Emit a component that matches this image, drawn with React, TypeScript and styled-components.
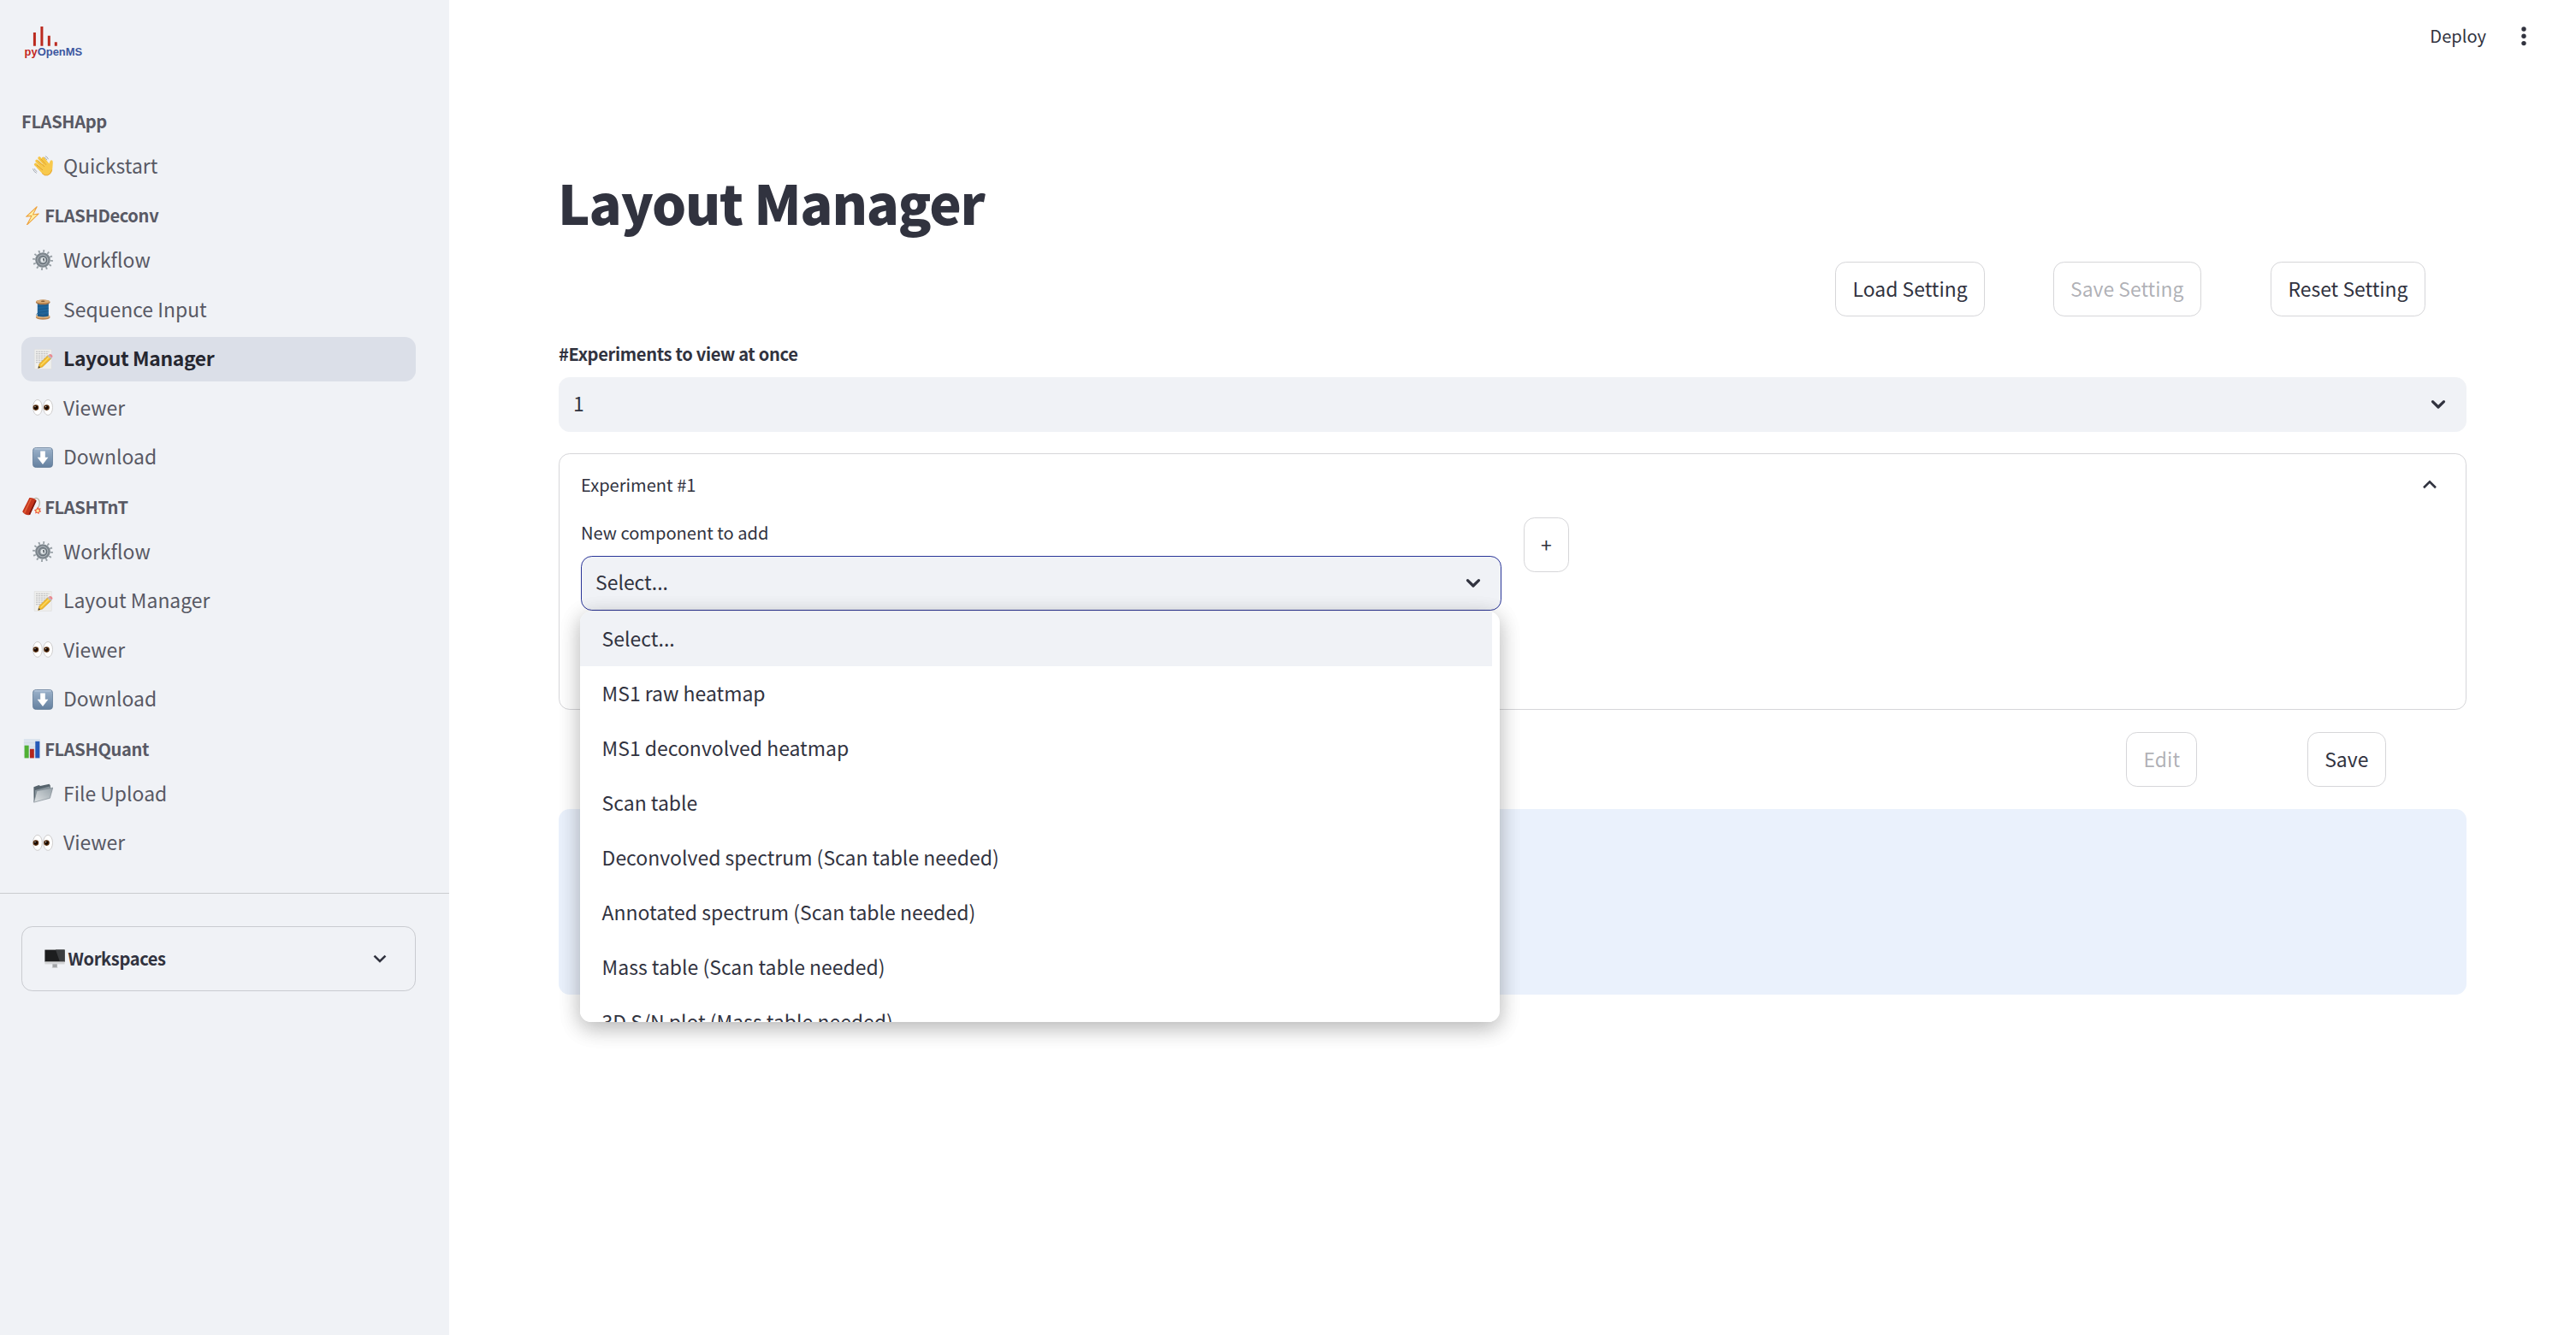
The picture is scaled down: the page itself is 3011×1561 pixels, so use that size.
import React from "react";
import styled, { createGlobalStyle } from "styled-components";

const FONT = '"Noto Sans CJK SC", "Noto Sans", sans-serif';
const INK = "#31333f";
const SIDE = "#f0f2f6";

const Global = createGlobalStyle`
  * { box-sizing: border-box; }
  body { margin: 0; background: #fff; color: ${INK}; font-family: ${FONT}; }
  button { font-family: inherit; }
`;

const Page = styled.div`display: flex; width: 3011px; height: 1561px; overflow: hidden;`;

const Sidebar = styled.aside`
  width: 525px; flex: none; background: ${SIDE}; display: flex; flex-direction: column;
`;
const LogoRow = styled.div`height: 113px; padding: 29px 0 0 28px;`;
const Nav = styled.nav`padding: 0 39px 0 25px;`;
const Section = styled.div`display: flex; flex-direction: column;`;
const SectionHead = styled.div`
  height: 52.8px; display: flex; align-items: center; padding-top: 5px;
  font-size: 20.1px; font-weight: 700; color: #585964; line-height: 1; letter-spacing: -0.34px;
`;
const HeadIcon = styled.span`display: flex; width: 27.2px; flex: none; padding: 0 0 1px 0.6px;`;
const NavItem = styled.a<{ $active?: boolean }>`
  display: flex; align-items: center; height: 51.2px; margin: 3.2px 0; padding: 0 0 3px 13px; gap: 12px;
  border-radius: 12.8px; font-size: 22.95px; line-height: 1;
  font-weight: ${(p) => (p.$active ? 700 : 400)};
  letter-spacing: ${(p) => (p.$active ? "-0.37px" : "normal")};
  color: ${(p) => (p.$active ? "#262730" : "#585964")};
  background: ${(p) => (p.$active ? "#dbdfe8" : "transparent")};
`;
const NavIcon = styled.span`display: flex; flex: none; margin-top: 2px;`;
const Divider = styled.div`height: 1px; margin-top: 29px; background: #cacccf;`;
const WorkspaceBox = styled.div`
  margin: 38px 39px 0 25px; height: 76px; border: 1px solid #c9cbd0; border-radius: 12.8px;
  display: flex; align-items: center; padding: 0 32px 0 26px; font-size: 20.1px; font-weight: 700;
  line-height: 1; letter-spacing: -0.38px;
`;
const Grow = styled.span`flex: 1; padding-left: 3.5px;`;

const Main = styled.main`flex: 1; padding: 0 128px; display: flex; flex-direction: column; min-width: 0;`;
const TopBar = styled.header`
  height: 84px; margin-right: -78px; display: flex; align-items: center; justify-content: flex-end; gap: 33px;
  font-size: 20.1px; line-height: 1;
`;
const Title = styled.h1`
  margin: 110px 0 28px -1px; height: 84px; line-height: 84px; font-size: 63.2px; font-weight: 900; letter-spacing: -1.22px;
`;
const ButtonRow = styled.div<{ $col: number; $top?: number }>`
  display: grid; grid-auto-flow: column; grid-auto-columns: ${(p) => p.$col}px; gap: 25.6px;
  justify-content: end; justify-items: start; margin-top: ${(p) => p.$top ?? 0}px;
`;
const Button = styled.button<{ $width?: number }>`
  height: 64px; padding: 0 19.2px 2px; border: 1px solid #d6d6d9; border-radius: 12.8px; background: #fff;
  color: ${INK}; font-size: 22.95px; line-height: 1; white-space: nowrap;
  width: ${(p) => (p.$width ? `${p.$width}px` : "auto")};
  &:disabled { color: rgba(49, 51, 63, 0.4); }
`;
const Label = styled.div<{ $bold?: boolean }>`
  height: 32px; line-height: 32px; margin: ${(p) => (p.$bold ? "28px 0 11px" : "1px 0 11px")}; font-size: 20.1px;
  font-weight: ${(p) => (p.$bold ? 700 : 400)}; letter-spacing: ${(p) => (p.$bold ? "-0.33px" : "normal")};
`;
const Select = styled.div<{ $focus?: boolean }>`
  height: 64px; border-radius: 12.8px; background: ${SIDE}; display: flex; align-items: center;
  justify-content: space-between; padding: 0 23px 0 16px; font-size: 22.95px; line-height: 1;
  border: 1px solid ${(p) => (p.$focus ? "#2a3598" : SIDE)};
`;
const SelectText = styled.span`padding-bottom: 3.5px;`;
const Expander = styled.section`
  margin-top: 25px; height: 300px; border: 1px solid #d6d6d9; border-radius: 12.8px; padding: 0 25px;
`;
const ExpanderHead = styled.div`
  height: 72px; display: flex; align-items: center; justify-content: space-between; padding-right: 8px;
  font-size: 20.1px; line-height: 1;
`;
const Columns = styled.div`display: grid; grid-template-columns: 1fr 1fr; gap: 25.6px; padding-top: 2px; align-items: start;`;
const Field = styled.div`position: relative; padding-top: 1px;`;
const Menu = styled.ul`
  position: absolute; z-index: 5; left: -1px; right: 2.6px; top: calc(100% + 1px); height: 480px; margin: 0;
  padding: 0 9px 0 0; list-style: none; overflow: hidden; background: #fff; border-radius: 12.8px;
  box-shadow: 0 6.4px 25.6px rgba(0, 0, 0, 0.16), 0 6.4px 25.6px rgba(0, 0, 0, 0.16);
`;
const Option = styled.li<{ $on?: boolean }>`
  height: 64px; display: flex; align-items: center; padding: 0 25.6px 2px; font-size: 22.98px; line-height: 1;
  background: ${(p) => (p.$on ? SIDE : "#fff")};
`;
const Info = styled.div`margin-top: 26px; height: 217px; border-radius: 12.8px; background: #eaf1fc;`;

const Emoji = ({ size = 24, children }: { size?: number; children: React.ReactNode }) => (
  <svg width={size} height={size} viewBox="0 0 24 24" fill="none">{children}</svg>
);
const Wave = () => (
  <Emoji>
    <g stroke="#f6c544" strokeLinecap="round" strokeWidth="3.4">
      <path d="M5 6.2L13 14M8 2.8L16 12M12.6 3.2L18 10.5M3.6 10.3L11 17" />
    </g>
    <path d="M7 13L16.5 6.8L19.5 9.5C20 8 20.4 5.4 22 5.2C24 5 24 8 23.6 11C23.3 15 23.4 19 20.5 21.6C17.5 24 13.6 23.4 11 20.5L5 14Z" fill="#f8c94c" />
    <path d="M6.5 6L14 13M9.8 4L16 10.8M5 11L12 17" stroke="#d99a2b" strokeWidth=".8" />
    <path d="M11 20.5Q14 24 17.8 22.9Q21.6 21.4 22.8 16.5" stroke="#e3a22f" strokeWidth=".9" />
    <path d="M14 2.2Q16 3 16.8 4.8M15.2.6Q17.6 1.5 18.4 3.8M2.3 15.5Q3 17.5 5 18.6M.5 15.6Q1.3 18.8 4.4 20.3" stroke="#a9adb5" strokeWidth="1" strokeLinecap="round" />
  </Emoji>
);
const Gear = () => (
  <Emoji>
    <circle cx="12" cy="12" r="10.4" stroke="#98a0a6" strokeWidth="3" strokeDasharray="1.8 3.645" />
    <circle cx="12" cy="12" r="7.6" fill="#aab1b7" stroke="#7c858c" strokeWidth="2.4" />
    <circle cx="12" cy="12" r="4.7" fill="#8b949b" stroke="#667078" strokeWidth="1.2" />
    <circle cx="12.4" cy="12" r="2.9" fill="#e3e8eb" />
    <path d="M12 10.8h1.2v2.6" stroke="#3f474e" strokeWidth="1.2" />
  </Emoji>
);
const Spool = () => (
  <Emoji>
    <path d="M5.8 4.5h13v15h-13z" fill="#1f659b" />
    <path d="M6 16Q4.4 17 5 19M6 8.5L18.6 6.8M6 12L18.6 10.3M6 15.5L18.6 13.8M6 18.6L18.6 17" stroke="#195583" strokeWidth=".7" />
    <ellipse cx="12.2" cy="21" rx="8.4" ry="2.8" fill="#b98550" />
    <ellipse cx="12.2" cy="19.9" rx="8.4" ry="2.2" fill="#dcb07c" />
    <path d="M6 17.5h12.6v2.2q-6 1.6-12.6 0z" fill="#1b5a8c" />
    <ellipse cx="12.2" cy="3.4" rx="8.4" ry="2.9" fill="#a87443" />
    <ellipse cx="12.2" cy="2.5" rx="8.2" ry="2.1" fill="#d9ab76" />
    <ellipse cx="12.2" cy="2.3" rx="2.4" ry=".7" fill="#80552e" />
  </Emoji>
);
const Memo = () => (
  <Emoji>
    <path d="M2.2.5h20v23h-20z" fill="#efefed" stroke="#dcdcdc" strokeWidth=".6" />
    <path d="M4 3.2h15.5M4 5.7h14.5M4 8.2h12.5M4 10.7h10.5M4 13.2h8M4 15.7h6" stroke="#b4b6b8" strokeWidth=".9" strokeDasharray="2.2 .7" />
    <path d="M6.6 22.4L8 17.4L18 7.6L21.8 11.2L11.6 21Z" fill="#f3bc2e" stroke="#b98419" strokeWidth=".5" />
    <path d="M9.6 19.4L19.8 9.3" stroke="#fbdc6a" strokeWidth="1.3" />
    <path d="M17.4 8.2L18.8 6.9L22.4 10.4L21.2 11.7Z" fill="#b9bcc0" />
    <path d="M18.8 6.9L19.8 6.2Q21.3 5.6 22.8 7Q24 8.6 23.2 9.6L22.4 10.4Z" fill="#e98b92" />
    <path d="M6.6 22.4L7.3 20L9 21.7Z" fill="#333" />
  </Emoji>
);
const Eyes = () => (
  <Emoji>
    <g fill="#fff" stroke="#c4c2c0" strokeWidth=".8">
      <ellipse cx="5.9" cy="11.4" rx="5.4" ry="9" />
      <ellipse cx="18.1" cy="11.4" rx="5.4" ry="9" />
    </g>
    <circle cx="3.9" cy="11.6" r="3.3" fill="#5a2f0e" /><circle cx="3.9" cy="11.6" r="2.1" fill="#130903" />
    <circle cx="16.5" cy="11.6" r="3.3" fill="#5a2f0e" /><circle cx="16.5" cy="11.6" r="2.1" fill="#130903" />
    <circle cx="3" cy="10.6" r=".6" fill="#fff" /><circle cx="15.6" cy="10.6" r=".6" fill="#fff" />
  </Emoji>
);
const Down = () => (
  <Emoji>
    <defs><linearGradient id="dl" x1="0" y1="0" x2="0" y2="1"><stop stopColor="#9db3cb" /><stop offset="1" stopColor="#64809f" /></linearGradient></defs>
    <rect x=".4" y=".4" width="23.2" height="23.2" rx="4" fill="url(#dl)" stroke="#5f7994" strokeWidth=".8" />
    <path d="M2.5 1.9h19" stroke="#c3d2e2" strokeWidth="1" strokeLinecap="round" />
    <path d="M9.2 4.5h5.6v7.3h3.6L12 20L5.6 11.8h3.6z" fill="#fff" />
  </Emoji>
);
const Folder = () => (
  <Emoji>
    <path d="M1.4 4.2L7.5 2L9 3L19.6.8L20.8 2.4V8L2.6 21.8H1.6Z" fill="#56636c" />
    <path d="M3 8L20 3.4V8L3 16z" fill="#87939b" />
    <defs><linearGradient id="fd" x1="0" y1="1" x2="1" y2="0"><stop stopColor="#dfe3e5" /><stop offset="1" stopColor="#96a1a8" /></linearGradient></defs>
    <path d="M5 8.8L23.8 5L20.4 17.2L1.6 22.2Z" fill="url(#fd)" stroke="#76828a" strokeWidth=".6" />
  </Emoji>
);
const Bolt = () => (
  <Emoji size={22.4}>
    <path d="M18.4.8L5 13.2L11.8 12.2L5.8 23.6L20.6 9.6L13.4 10.6Z" fill="#fdf0a4" stroke="#eda03c" strokeWidth="1.1" strokeLinejoin="round" />
  </Emoji>
);
const Firecracker = () => (
  <Emoji size={22.4}>
    <path d="M14 4Q17-.5 20.5 3.2Q23.5 8 19.6 14" stroke="#b7b3a4" strokeWidth="1.3" />
    <path d="M9 1.2Q13.8.2 17.8 4.4L9.6 22.6Q3.8 23.6.2 18.6Z" fill="#c4351c" />
    <path d="M11 2.4L2.8 20" stroke="#e0603a" strokeWidth="1.8" />
    <path d="M17 4.6L8.9 22.2" stroke="#7c160d" strokeWidth="1.8" />
    <path d="M19.6 12.4l1.2 2.2 2.6-.3-1 2.4 1.6 2-2.6.5-.6 2.4-2.2-1.6-2.4.8.4-2.6-1.8-1.8 2.6-.8z" fill="#ee5f45" />
    <circle cx="19.4" cy="17.4" r="1.8" fill="#ffe59a" />
  </Emoji>
);
const Chart = () => (
  <Emoji size={22.4}>
    <path d="M2 0h20.4v24H2z" fill="#dbe4ee" />
    <path d="M2 5h20.4M2 10h20.4M2 15h20.4M2 20h20.4" stroke="#c4cfdb" strokeWidth=".5" />
    <path d="M2.8 8.2h5.4V24H2.8z" fill="#4fb033" />
    <path d="M9.6 12.6h5.2V24H9.6z" fill="#b3261d" />
    <path d="M16.4 3h5.4v21h-5.4z" fill="#2559b8" />
  </Emoji>
);
const Monitor = () => (
  <Emoji>
    <path d="M9.4 18h5.4v4.4H9.4z" fill="#a3a5a8" /><path d="M8.8 22h6.6v1H8.8z" fill="#cfd0d2" />
    <path d="M.4 1.6h23.2v14.2H.4z" fill="#1d1e1f" />
    <path d="M13 1.6h10.6v14.2H18z" fill="#3b3d3f" />
    <path d="M.4 15.4h23.2v3H.4z" fill="#d3d4d6" />
  </Emoji>
);
const Chevron = ({ up, round }: { up?: boolean; round?: boolean }) => (
  <svg
    width="18" height="12" viewBox="0 0 18 12" fill="none" stroke={INK} strokeWidth={round ? 3.2 : 2.6}
    strokeLinecap={round ? "round" : "butt"} strokeLinejoin={round ? "round" : "miter"}
  >
    <path d={up ? "M2 9.2L9 2.4L16 9.2" : "M2.5 2.6L9 9L15.5 2.6"} />
  </svg>
);
const MenuDots = () => (
  <svg width="22" height="24" viewBox="0 0 22 24" fill={INK}>
    <circle cx="11" cy="4" r="2.7" /><circle cx="11" cy="12.3" r="2.7" /><circle cx="11" cy="20.6" r="2.7" />
  </svg>
);
const Logo = () => (
  <svg width="72" height="42" viewBox="28 29 72 42">
    <path d="M40.4 38v15.8M48.9 31v22.8M57.3 41.7v12.1M65.3 49.3v4.5" stroke="#bb2a1f" strokeWidth="3" />
    <text x="28.6" y="64.7" fontFamily="Liberation Sans, sans-serif" fontWeight="700" fontSize="12.95" fill="#3d57a0"><tspan fill="#c4281f">py</tspan>OpenMS</text>
  </svg>
);

type Item = [label: string, icon: React.FC, active?: boolean];
const sections: { name: string; Icon?: React.FC; items: Item[] }[] = [
  { name: "FLASHApp", items: [["Quickstart", Wave]] },
  {
    name: "FLASHDeconv",
    Icon: Bolt,
    items: [["Workflow", Gear], ["Sequence Input", Spool], ["Layout Manager", Memo, true], ["Viewer", Eyes], ["Download", Down]],
  },
  {
    name: "FLASHTnT",
    Icon: Firecracker,
    items: [["Workflow", Gear], ["Layout Manager", Memo], ["Viewer", Eyes], ["Download", Down]],
  },
  { name: "FLASHQuant", Icon: Chart, items: [["File Upload", Folder], ["Viewer", Eyes]] },
];

const options = [
  "Select...",
  "MS1 raw heatmap",
  "MS1 deconvolved heatmap",
  "Scan table",
  "Deconvolved spectrum (Scan table needed)",
  "Annotated spectrum (Scan table needed)",
  "Mass table (Scan table needed)",
  "3D S/N plot (Mass table needed)",
];

export default function App() {
  return (
    <>
      <Global />
      <Page>
        <Sidebar>
          <LogoRow><Logo /></LogoRow>
          <Nav>
            {sections.map(({ name, Icon, items }) => (
              <Section key={name}>
                <SectionHead>{Icon && <HeadIcon><Icon /></HeadIcon>}{name}</SectionHead>
                {items.map(([label, ItemIcon, active]) => (
                  <NavItem key={label} $active={active}><NavIcon><ItemIcon /></NavIcon>{label}</NavItem>
                ))}
              </Section>
            ))}
          </Nav>
          <Divider />
          <WorkspaceBox><Monitor /><Grow>Workspaces</Grow><Chevron /></WorkspaceBox>
        </Sidebar>
        <Main>
          <TopBar><span>Deploy</span><MenuDots /></TopBar>
          <Title>Layout Manager</Title>
          <ButtonRow $col={228.8}>
            <Button>Load Setting</Button>
            <Button disabled>Save Setting</Button>
            <Button>Reset Setting</Button>
          </ButtonRow>
          <Label $bold>#Experiments to view at once</Label>
          <Select><SelectText>1</SelectText><Chevron round /></Select>
          <Expander>
            <ExpanderHead><span>Experiment #1</span><Chevron up /></ExpanderHead>
            <Columns>
              <Field>
                <Label>New component to add</Label>
                <Select $focus><SelectText>Select...</SelectText><Chevron round /></Select>
                <Menu>{options.map((o, i) => <Option key={o} $on={i === 0}>{o}</Option>)}</Menu>
              </Field>
              <Button $width={53}>+</Button>
            </Columns>
          </Expander>
          <ButtonRow $col={186} $top={26}>
            <Button disabled>Edit</Button>
            <Button>Save</Button>
          </ButtonRow>
          <Info />
        </Main>
      </Page>
    </>
  );
}
